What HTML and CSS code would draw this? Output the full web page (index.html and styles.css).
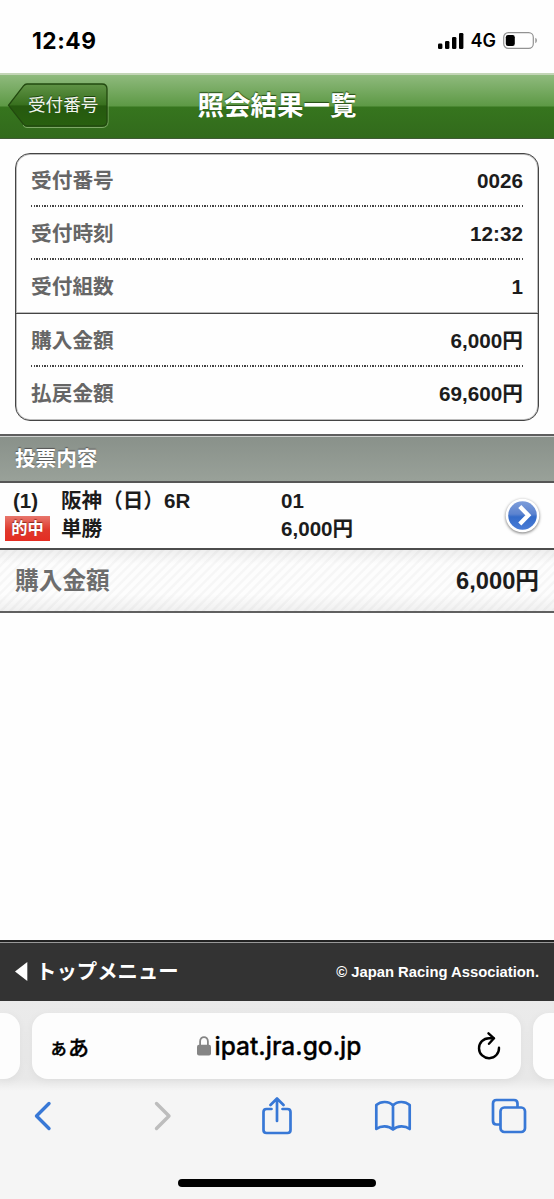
FILE: index.html
```html
<!DOCTYPE html>
<html lang="ja">
<head>
<meta charset="utf-8">
<title>照会結果一覧</title>
<link rel="stylesheet" href="styles.css">
</head>
<body>
<div class="phone">
  <div class="status">
    <span class="clock">12:49</span>
    <div class="status-right">
      <svg class="signal" width="26" height="16" viewBox="0 0 26 16"><rect x="0" y="10.5" width="4.4" height="5.5" rx="1.3"/><rect x="7" y="8" width="4.4" height="8" rx="1.3"/><rect x="14" y="4" width="4.4" height="12" rx="1.3"/><rect x="21" y="0" width="4.4" height="16" rx="1.3"/></svg>
      <span class="net">4G</span>
      <svg class="battery" width="35" height="17" viewBox="0 0 35 17"><rect x=".7" y=".7" width="29.6" height="15.6" rx="4.6" fill="none" stroke="#929292" stroke-width="1.2"/><rect x="2.8" y="3" width="9" height="11" rx="2.2"/><path d="M32.3 5.8c2.1.8 2.1 4.6 0 5.4z" fill="#929292"/></svg>
    </div>
  </div>
  <header class="header">
    <a class="back">
      <svg class="back-shape" width="102" height="46" viewBox="0 0 102 46">
        <defs><linearGradient id="backFill" x1="0" y1="0" x2="0" y2="1"><stop offset="0" stop-color="#609346"/><stop offset=".5" stop-color="#38701e"/><stop offset=".52" stop-color="#26590f"/><stop offset="1" stop-color="#28600f"/></linearGradient></defs>
        <path d="M16.5 3.4Q18 2 20 2H95Q101 2 101 7V39Q101 44.500 95 44.500H20Q18 44.500 16.500 43Z" fill="none" stroke="#7da966" stroke-width="1"/>
        <path d="M16.500 2.800Q18 1 20 1H95Q100 1 100 6V38Q100 43 95 43H20Q18 43 16.500 41.400L1.500 22.300Z" fill="url(#backFill)" stroke="#22490f" stroke-width="1.300"/>
      </svg>
      <span class="back-label">受付番号</span>
    </a>
    <h1 class="title">照会結果一覧</h1>
  </header>
  <main class="content">
    <section class="card">
      <div class="group">
        <div class="row"><span class="label">受付番号</span><span class="value">0026</span></div>
        <div class="row"><span class="label">受付時刻</span><span class="value">12:32</span></div>
        <div class="row"><span class="label">受付組数</span><span class="value">1</span></div>
      </div>
      <div class="group">
        <div class="row"><span class="label">購入金額</span><span class="value">6,000円</span></div>
        <div class="row"><span class="label">払戻金額</span><span class="value">69,600円</span></div>
      </div>
    </section>
    <h2 class="section-title">投票内容</h2>
    <div class="bet">
      <div class="bet-no"><span class="no">(1)</span><span class="hit">的中</span></div>
      <div class="bet-race"><span>阪神（日）6R</span><span>単勝</span></div>
      <div class="bet-amount"><span>01</span><span>6,000円</span></div>
      <svg class="go" width="40" height="40" viewBox="0 0 40 40">
        <defs><linearGradient id="goFill" x1="0" y1="0" x2="0" y2="1"><stop offset="0" stop-color="#7d9dda"/><stop offset=".45" stop-color="#5c83cf"/><stop offset=".55" stop-color="#346bc9"/><stop offset="1" stop-color="#4a7cd6"/></linearGradient></defs>
        <circle class="go-disc" cx="19.500" cy="19.500" r="16.800" fill="#fff"/>
        <circle cx="19.500" cy="19.500" r="14.300" fill="url(#goFill)"/>
        <path d="M16.800 10.500L25.300 19.300L16.800 28" fill="none" stroke="#fff" stroke-width="4.300"/>
      </svg>
    </div>
    <div class="total"><span class="total-label">購入金額</span><span class="total-value">6,000円</span></div>
  </main>
  <footer class="footer">
    <a class="top-link"><svg width="13" height="19" viewBox="0 0 13 19"><path d="M0 9.500L12.300 0V19Z" fill="#fff"/></svg><span>トップメニュー</span></a>
    <span class="copyright">© Japan Racing Association.</span>
  </footer>
  <div class="browser">
    <div class="tabs">
      <div class="tab-edge left"></div>
      <div class="address">
        <span class="aa"><span class="aa-small">ぁ</span>あ</span>
        <div class="site">
          <svg width="14" height="20" viewBox="0 0 14 20"><path d="M3.100 10V5.600C3.100-.4 10.900-.4 10.900 5.600V10" fill="none" stroke="#858585" stroke-width="1.800"/><rect x="0" y="8.800" width="14" height="10.800" rx="2" fill="#858585"/></svg>
          <span class="url">ipat.jra.go.jp</span>
        </div>
        <svg class="reload" width="24" height="28" viewBox="0 0 24 28" fill="none" stroke="#000" stroke-width="2.400" stroke-linecap="round" stroke-linejoin="round"><path d="M22 15.700A10 10 0 1 1 12 6.200H16.500"/><path d="M11.500 1.300L17 6.300L12 11.800"/></svg>
      </div>
      <div class="tab-edge right"></div>
    </div>
    <nav class="tools">
      <svg width="18" height="30" viewBox="0 0 18 30" fill="none" stroke="#3878d6" stroke-width="3.400" stroke-linecap="round" stroke-linejoin="round"><path d="M15 2.500L2.500 15L15 27.500"/></svg>
      <svg width="18" height="30" viewBox="0 0 18 30" fill="none" stroke="#bdbdbd" stroke-width="3.400" stroke-linecap="round" stroke-linejoin="round"><path d="M2.500 2.500L15 15L2.500 27.500"/></svg>
      <svg width="30" height="38" viewBox="0 0 30 38" fill="none" stroke="#3878d6" stroke-width="2.700" stroke-linecap="round" stroke-linejoin="round"><path d="M9.500 12H4.500Q1.500 12 1.500 15V33Q1.500 36 4.500 36H25.500Q28.500 36 28.500 33V15Q28.500 12 25.500 12H20.500M15 24V2M8.500 8L15 1.500L21.500 8"/></svg>
      <svg width="38" height="32" viewBox="0 0 38 32" fill="none" stroke="#3878d6" stroke-width="2.700" stroke-linecap="round" stroke-linejoin="round"><path d="M19 5.500C15 1 7 .8 2.300 5V29C7 25.500 14.500 25.500 19 29.500C23.500 25.500 31 25.500 35.700 29V5C31 .8 23 1 19 5.500ZM19 5.500V29"/></svg>
      <svg width="36" height="36" viewBox="0 0 36 36" fill="none" stroke="#3878d6" stroke-width="2.700" stroke-linejoin="round"><path d="M9.500 26.500H5.500Q2 26.500 2 23V5.500Q2 2 5.500 2H23Q26.500 2 26.500 5.500V9.500"/><rect x="9.500" y="9.500" width="24.500" height="24.500" rx="3.800"/></svg>
    </nav>
    <div class="home"></div>
  </div>
</div>
</body>
</html>
```

FILE: styles.css
```css
* { box-sizing: border-box; }
body {
  margin: 0;
  background: #fefefe;
  color: #1c1c1c;
  font-family: "Liberation Sans", "Noto Sans CJK JP", sans-serif;
}
svg { display: block; flex: none; }
.phone { width: 554px; height: 1199px; display: flex; flex-direction: column; overflow: hidden; }

.status { height: 73px; flex: none; display: flex; align-items: center; justify-content: space-between; padding: 8px 16px 0 32px; color: #000; font-family: Inter, sans-serif; }
.clock { font-size: 22.700px; font-weight: 700; letter-spacing: .55px; }
.status-right { display: flex; align-items: center; }
.net { font-size: 18px; font-weight: 600; margin: 0 7px 0 7px; }

.header {
  height: 66px; flex: none; display: grid; grid-template-columns: 120px 1fr 120px; align-items: center;
  padding: 0 0 1px;
  border-top: 2px solid #c3d5b6; border-bottom: 1px solid #405a36;
  background: linear-gradient(#8fba7d 0, #5d9945 31px, #36751e 32px, #326a1c 100%);
}
.back { display: grid; margin-left: 7px; width: 102px; }
.back-shape, .back-label { grid-area: 1 / 1; }
.back-label { align-self: center; padding: 0 0 2px 21px; color: #f1f5ee; font-size: 17.600px; line-height: 26px; white-space: nowrap; text-shadow: 0 -1px 0 #1d430c; }
.title { margin: 0; text-align: center; color: #fff; font-size: 26.500px; line-height: 40px; white-space: nowrap; text-shadow: 0 -1px 1px #244c14; }

.content { flex: 1; }
.card { margin: 14px 15px 0; height: 268px; border: 1px solid #444; border-radius: 15px; box-shadow: inset 0 0 0 1px #bdbdbd; }
.group { padding: 0 15px; }
.group + .group { border-top: 1px solid #444; box-shadow: 0 -1px 0 #bdbdbd; }
.row { height: 53px; display: flex; align-items: center; justify-content: space-between; font-size: 20.700px; font-weight: 700; line-height: 30px; padding-top: 1px; }
.row:not(:last-child) {
  background: repeating-linear-gradient(90deg, #444 0 1.330px, #fefefe 1.330px 2.667px) 0 100% / 8px 2px repeat-x;
}
.group:first-child .row:not(:last-child) { background-position: 0 100%; }
.label { color: #666; }

.section-title {
  margin: 13px 0 0; height: 49px; padding: 1px 15px 0; display: flex; align-items: center;
  border-top: 2px solid #5e5e5e; border-bottom: 2px solid #565656;
  background: linear-gradient(#d0d3d1 0 1px, #89918a 1px, #99a199 100%);
  color: #fff; font-size: 20.600px; line-height: 30px; text-shadow: 0 -1px 1px #555;
}
.bet { height: 65px; display: grid; grid-template-columns: 56px 220px 1fr 40px; padding: 4px 11px 0 5px; font-size: 20.600px; line-height: 28px; font-weight: 700; }
.bet > div { display: flex; flex-direction: column; }
.no { padding-left: 8px; }
.hit { width: 45px; height: 25px; margin-top: 1px; background: linear-gradient(#e8766c, #df392d 55%, #e52d22); color: #fff; font-size: 16.200px; line-height: 24px; text-align: center; text-shadow: 0 -1px 1px #8c2a20; }
.go { align-self: start; margin-top: 9px; }
.go-disc { filter: drop-shadow(0 1px 1.500px rgba(0,0,0,.55)); }
.total {
  height: 65px; padding: 1px 15px 0; display: flex; align-items: center; justify-content: space-between;
  border-top: 2px solid #4c4c4c; border-bottom: 2px solid #606060;
  background:
    linear-gradient(rgba(0,0,0,.06), rgba(0,0,0,0) 14px, rgba(0,0,0,0) 44px, rgba(0,0,0,.05)),
    repeating-linear-gradient(135deg, #fdfdfd 0 3px, #f6f6f6 4px 5.500px, #fdfdfd 6.500px);
  font-size: 23.700px; line-height: 32px; font-weight: 700;
}
.total-label { color: #6d6d6d; }

.footer {
  height: 61px; flex: none; display: flex; align-items: center; justify-content: space-between; padding: 0 15px;
  border-top: 2px solid #222; background: linear-gradient(#999 0 1px, #333 1px);
  color: #fff; font-weight: 700;
}
.top-link { display: flex; align-items: center; gap: 8px; font-size: 20.400px; line-height: 30px; }
.copyright { font-size: 14.800px; }

.browser { height: 198px; flex: none; background: #f5f5f5; }
.tabs { height: 90px; display: grid; grid-template-columns: 20px 489px 21px; gap: 12px; padding-top: 12px; background: linear-gradient(#ebebeb, #e8e8e8 78px, #f5f5f5); }
.address, .tab-edge { height: 66px; background: #fdfdfd; box-shadow: 0 2px 10px rgba(0,0,0,.05); }
.tab-edge.left { border-radius: 0 16px 16px 0; }
.tab-edge.right { border-radius: 16px 0 0 16px; }
.address { border-radius: 16px; display: grid; grid-template-columns: 60px 1fr 60px; align-items: center; padding: 0 20px 0 20px; color: #000; }
.aa { margin-left: -3px; font: 500 21px/30px "Noto Sans CJK JP", sans-serif; white-space: nowrap; -webkit-text-stroke: .4px #000; }
.aa-small { font-size: 19px; }
.site { display: flex; align-items: center; justify-content: center; gap: 4px; padding-left: 5px; }
.url { font: 500 24.500px/32px Inter, sans-serif; -webkit-text-stroke: .3px #000; }
.reload { justify-self: end; }
.tools { height: 50px; display: grid; grid-template-columns: 120px 108px 112px 117px 36px; align-items: center; padding: 0 0 0 34px; }
.home { width: 198px; height: 8px; border-radius: 4px; background: #000; margin: 38px auto 0; }
```
